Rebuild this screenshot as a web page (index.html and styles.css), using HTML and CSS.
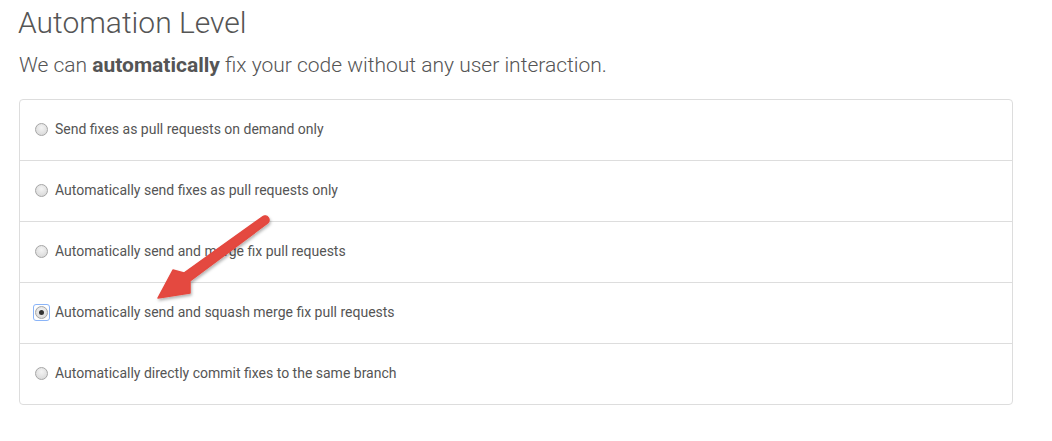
FILE: index.html
```html
<!DOCTYPE html>
<html>
<head>
<meta charset="utf-8">
<link rel="stylesheet" href="styles.css">
</head>
<body>
<div class="page">
  <h1 class="title">Automation Level</h1>
  <p class="lead">We can <strong>automatically</strong> fix your code without any user interaction.</p>
  <div class="panel">
    <label class="row"><span class="radio"></span><span class="label">Send fixes as pull requests on demand only</span></label>
    <label class="row"><span class="radio"></span><span class="label">Automatically send fixes as pull requests only</span></label>
    <label class="row"><span class="radio"></span><span class="label">Automatically send and merge fix pull requests</span></label>
    <label class="row"><span class="radio checked"></span><span class="label">Automatically send and squash merge fix pull requests</span></label>
    <label class="row"><span class="radio"></span><span class="label">Automatically directly commit fixes to the same branch</span></label>
  </div>
  <svg class="arrow" width="1052" height="441" viewBox="0 0 1052 441">
    <defs>
      <filter id="sh" x="-20%" y="-20%" width="140%" height="140%">
        <feDropShadow dx="1" dy="2" stdDeviation="1.5" flood-color="#000" flood-opacity="0.3"/>
      </filter>
    </defs>
    <path d="M262.6,216.8 L184,273 L173,270 L158,298 L190,293 L190,281 L267.4,223.2 A4,4 0 0 0 262.6,216.8 Z" fill="#e4483f" stroke="#e4483f" stroke-width="1.5" stroke-linejoin="round" filter="url(#sh)"/>
  </svg>
</div>
</body>
</html>
```
FILE: styles.css
```css
html, body {
  margin: 0;
  padding: 0;
  background: #fff;
}
body {
  font-family: Roboto, "Liberation Sans", sans-serif;
  color: #555;
}
.page {
  width: 994px;
  margin-left: 19px;
  padding-top: 1px;
}
.title {
  font-weight: 300;
  font-size: 30px;
  line-height: 36px;
  margin: 4px 0 0 -1px;
  color: #555;
}
.lead {
  font-weight: 300;
  font-size: 21px;
  line-height: 28px;
  margin: 10px 0 0 0;
  color: #555;
}
.lead strong {
  font-weight: 700;
}
.panel {
  margin-top: 20px;
  border: 1px solid #ddd;
  border-radius: 4px;
}
.row {
  display: flex;
  align-items: center;
  height: 60px;
  padding-left: 15px;
  gap: 7px;
  font-size: 14px;
  border-top: 1px solid #ddd;
}
.row:first-child {
  border-top: none;
}
.radio {
  width: 11px;
  height: 11px;
  border-radius: 50%;
  border: 1px solid #a6a6a6;
  background: radial-gradient(circle at 50% 35%, #f4f4f4, #d4d4d4);
  box-sizing: content-box;
  flex: none;
  position: relative;
  margin-top: -2px;
}
.radio.checked::before {
  content: "";
  position: absolute;
  left: -3px;
  top: -3px;
  width: 15px;
  height: 15px;
  border: 1px solid #8ab4f8;
  border-radius: 3px;
}
.radio.checked::after {
  content: "";
  position: absolute;
  left: 3px;
  top: 3px;
  width: 5px;
  height: 5px;
  border-radius: 50%;
  background: #333;
}
.label {
  line-height: 20px;
  margin-top: -2px;
}
.arrow {
  position: absolute;
  left: 0;
  top: 0;
  pointer-events: none;
}
```
